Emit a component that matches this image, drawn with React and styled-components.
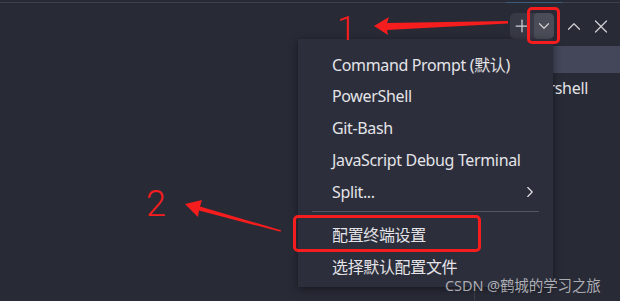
import styled, { createGlobalStyle } from 'styled-components';
import { Plus, ChevronDown, ChevronUp, ChevronRight, X } from 'lucide-react';

const GlobalStyle = createGlobalStyle`
  body {
    margin: 0;
    background: #282a36;
    font-family: "Noto Sans", "Noto Sans CJK SC", sans-serif;
  }
`;

const Page = styled.div`
  width: 620px;
  height: 301px;
  position: relative;
  overflow: hidden;
  background: #282a36;
  display: flex;
  flex-direction: column;
`;

const TopRule = styled.div`
  height: 2px;
  border-bottom: 1px solid #3d404f;
  display: flex;
  justify-content: flex-end;
  padding-right: 58px;

  &::after {
    content: '';
    width: 56px;
    height: 1px;
    margin-top: 2px;
    background: #3b5b7c;
  }
`;

const Toolbar = styled.div`
  height: 43px;
  box-sizing: border-box;
  padding: 10px 8px 0 0;
  display: flex;
  justify-content: flex-end;
  align-items: flex-start;
  gap: 5px;
`;

const SplitGroup = styled.div`
  display: flex;
  margin-right: 4px;
  border-radius: 5px;
  overflow: hidden;
  background: #373945;
`;

const IconButton = styled.div`
  width: ${(p) => p.w || 22}px;
  height: 26px;
  display: flex;
  align-items: center;
  justify-content: center;
  color: #cfd0d4;
  background: ${(p) => (p.active ? '#4a4c57' : 'transparent')};
  border-radius: ${(p) => (p.active ? '4px' : '0')};
`;

const Body = styled.div`
  flex: 1;
  display: flex;
`;

const Editor = styled.div`
  flex: 1;
`;

const TabList = styled.div`
  width: 145px;
  border-left: 1px solid #3a3c48;
  display: flex;
  flex-direction: column;
`;

const TabItem = styled.div`
  height: 27px;
  display: flex;
  align-items: center;
  padding-left: 34px;
  font-size: 16px;
  letter-spacing: -0.3px;
  color: #e2e2e6;
  background: ${(p) => (p.selected ? '#44475a' : 'transparent')};
  margin-bottom: ${(p) => (p.selected ? '1px' : '0')};
`;

const Menu = styled.div`
  position: absolute;
  left: 298px;
  top: 39px;
  width: 255px;
  height: 248px;
  box-sizing: border-box;
  padding: 9px 0 0;
  background: #2c2e3b;
  box-shadow: 0 2px 8px rgba(0, 0, 0, 0.45);
  display: flex;
  flex-direction: column;
`;

const MenuItem = styled.div`
  position: relative;
  height: ${(p) => p.h || 32}px;
  display: flex;
  align-items: center;
  justify-content: space-between;
  padding: 0 14px 0 34px;
  font-size: 16px;
  letter-spacing: -0.35px;
  color: #e4e4e8;
  white-space: nowrap;

  ${(p) =>
    p.marked &&
    `
    &::after {
      content: '';
      position: absolute;
      left: -5px;
      top: -3px;
      width: 188px;
      height: 37px;
      box-sizing: border-box;
      border: 3px solid #f51d1d;
      border-radius: 5px;
    }
  `}
`;

const Separator = styled.div`
  height: 1px;
  margin: 3px 14px 6px 14px;
  background: #55575f;
`;

const Highlight = styled.div`
  position: absolute;
  left: 527px;
  top: 7px;
  width: 33px;
  height: 37px;
  box-sizing: border-box;
  border: 3px solid #f51d1d;
  border-radius: 5px;
`;

const Number = styled.span`
  position: absolute;
  left: ${(p) => p.x}px;
  top: ${(p) => p.y}px;
  font-family: Roboto, "Liberation Sans", sans-serif;
  font-weight: 300;
  font-size: ${(p) => p.size}px;
  line-height: 1;
  color: #f51d1d;
`;

const Arrows = styled.svg`
  position: absolute;
  left: 0;
  top: 0;
  pointer-events: none;
`;

const Watermark = styled.div`
  position: absolute;
  left: 445px;
  top: 274px;
  font-size: 14.5px;
  letter-spacing: -0.1px;
  color: rgba(210, 210, 214, 0.78);
  white-space: nowrap;
`;

const items = ['Command Prompt (默认)', 'PowerShell', 'Git-Bash', 'JavaScript Debug Terminal'];

export default function App() {
  return (
    <Page>
      <GlobalStyle />
      <TopRule />
      <Toolbar>
        <SplitGroup>
          <IconButton w={24}>
            <Plus size={20} strokeWidth={1.5} />
          </IconButton>
          <IconButton w={20} active>
            <ChevronDown size={18} strokeWidth={1.6} />
          </IconButton>
        </SplitGroup>
        <IconButton>
          <ChevronUp size={25} strokeWidth={1.3} />
        </IconButton>
        <IconButton>
          <X size={25} strokeWidth={1.3} />
        </IconButton>
      </Toolbar>
      <Body>
        <Editor />
        <TabList>
          <TabItem selected />
          <TabItem>Powershell</TabItem>
        </TabList>
      </Body>

      <Menu>
        {items.map((t) => (
          <MenuItem key={t}>{t}</MenuItem>
        ))}
        <MenuItem>
          Split...
          <ChevronRight size={18} strokeWidth={1.5} />
        </MenuItem>
        <Separator />
        <MenuItem marked>配置终端设置</MenuItem>
        <MenuItem h={31}>选择默认配置文件</MenuItem>
      </Menu>

      <Highlight />
      <Number x={337} y={11} size={34}>1</Number>
      <Number x={146} y={186} size={36}>2</Number>
      <Arrows width="620" height="301" viewBox="0 0 620 301">
        <polygon
          fill="#f51d1d"
          points="374,26 389,17 387,23 508,21 508,23.5 387,30 388,35"
        />
        <polygon
          fill="#f51d1d"
          points="185,204 202,200 200,206.5 281,230.3 280.5,231.8 199,210.5 198,217"
        />
      </Arrows>
      <Watermark>CSDN @鹤城的学习之旅</Watermark>
    </Page>
  );
}
